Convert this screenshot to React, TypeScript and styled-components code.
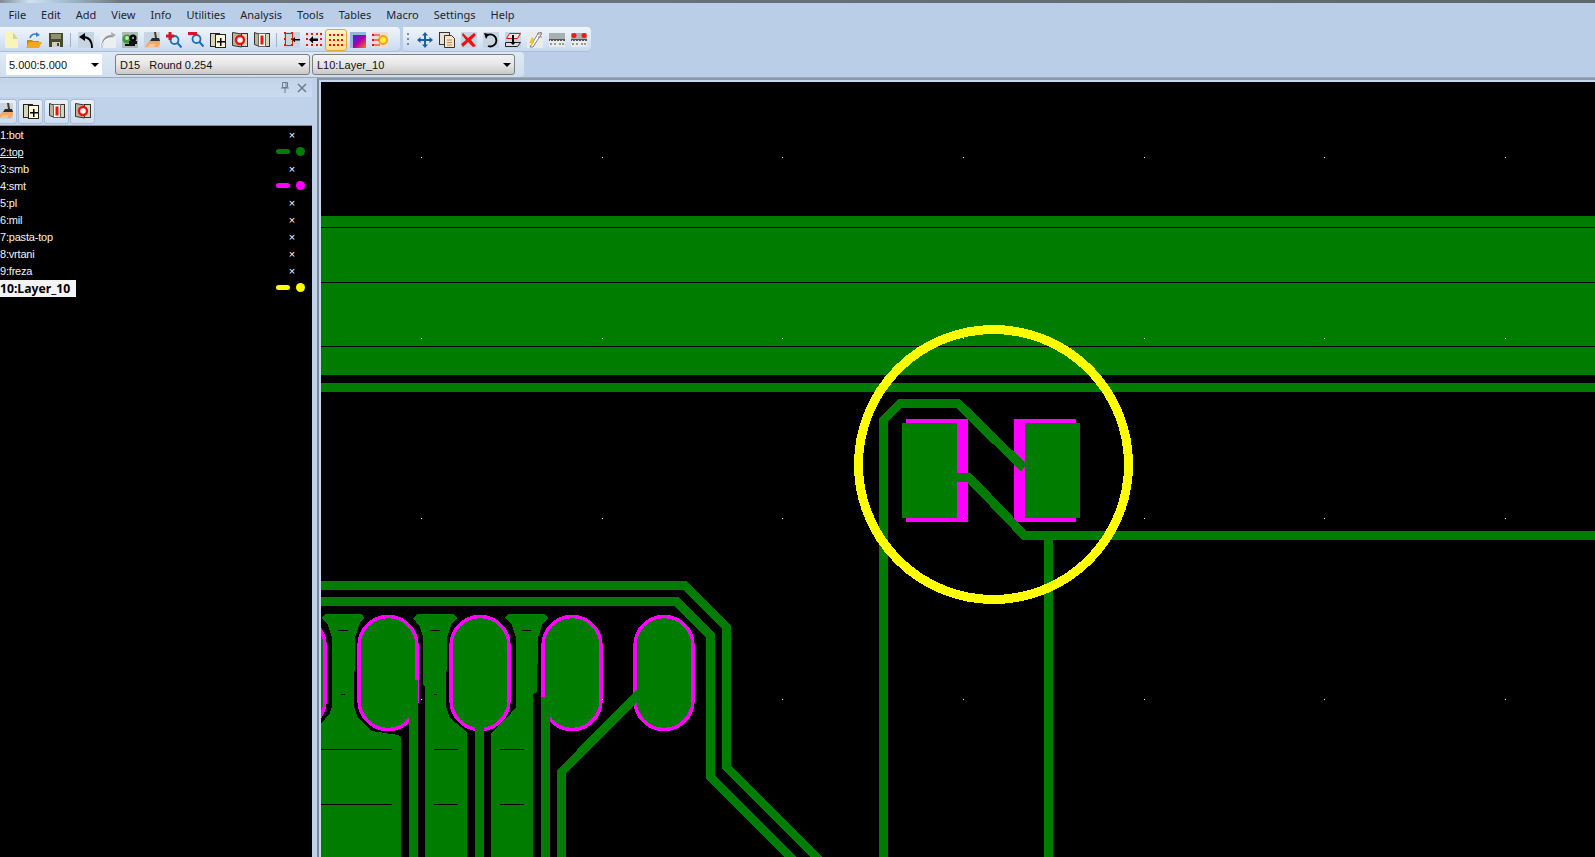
import React from "react";
import styled, { createGlobalStyle } from "styled-components";

const GREEN = "#007c00";
const MAGENTA = "#ff00ff";
const YELLOW = "#ffff00";

const Global = createGlobalStyle`
  html, body { margin: 0; padding: 0; background: #bacfe7; overflow: hidden; }
  body { font-family: "Noto Sans", "Liberation Sans", sans-serif; }
`;

const Window = styled.div`
  width: 1595px;
  height: 857px;
  display: flex;
  flex-direction: column;
  overflow: hidden;
  background: #bacfe7;
`;

const TitleStrip = styled.div`
  height: 3px;
  flex: none;
  background: linear-gradient(90deg, #7d8b96 0, #cfe3f2 30px, #a9c4d8 60px, #6f7880 120px, #5f666c 100%);
`;

const MenuBar = styled.div`
  height: 24px;
  flex: none;
  box-sizing: border-box;
  display: flex;
  align-items: center;
  padding: 0 0 2px 1px;
`;

const MenuItem = styled.span`
  padding: 0 7.5px;
  font-size: 11px;
  color: #1c2430;
`;

const ToolRow = styled.div`
  height: 25px;
  flex: none;
  display: flex;
  gap: 3px;
`;

const Toolbar = styled.div<{ $width: number; $inset: number }>`
  width: ${(p) => p.$width}px;
  height: 25px;
  box-sizing: border-box;
  display: flex;
  align-items: center;
  padding-left: ${(p) => p.$inset}px;
  border-radius: 0 4px 4px 0;
  background: linear-gradient(180deg, #f0f5fc 0, #dbe6f4 55%, #c6d8ee 100%);
  box-shadow: inset 0 -1px 0 #a9bfd9;
`;

const ToolButton = styled.span<{ $active?: boolean }>`
  width: 22px;
  height: 22px;
  flex: none;
  box-sizing: border-box;
  display: flex;
  align-items: center;
  justify-content: center;
  border-radius: 3px;
  ${(p) =>
    p.$active
      ? `border: 1px solid #e0a83c; background: linear-gradient(180deg, #fff3c4, #ffdf8c);`
      : ""}
`;

const Sep = styled.span`
  width: 1px;
  height: 14px;
  flex: none;
  margin: 0 4px 0 3px;
  background: #9db3cd;
`;

const Grip = styled.span`
  width: 2px;
  height: 14px;
  flex: none;
  margin-right: 5px;
  background: repeating-linear-gradient(180deg, #6e8bb0 0 2px, transparent 2px 5px);
`;

const ComboBar = styled.div`
  width: 524px;
  height: 25px;
  box-sizing: border-box;
  display: flex;
  align-items: center;
  padding-left: 6px;
  border-radius: 0 4px 4px 0;
  background: linear-gradient(180deg, #dfe9f6 0, #cfdeef 100%);
`;

const Combo = styled.div<{ $width: number; $plain?: boolean }>`
  width: ${(p) => p.$width}px;
  height: 21px;
  flex: none;
  box-sizing: border-box;
  display: flex;
  align-items: center;
  justify-content: space-between;
  padding: 0 3px 0 ${(p) => (p.$plain ? 3 : 4)}px;
  margin-right: ${(p) => (p.$plain ? 13 : 2)}px;
  font-family: "Liberation Sans", Arial, sans-serif;
  font-size: 11px;
  color: #111;
  white-space: pre;
  ${(p) =>
    p.$plain
      ? "background: #fff;"
      : `border: 1px solid #7d7d7d; border-radius: 3px;
         background: linear-gradient(180deg, #f4f4f4 0, #e6e6e6 50%, #c9c9c9 100%);`}
`;

const Caret = styled.span`
  width: 0;
  height: 0;
  border-left: 4px solid transparent;
  border-right: 4px solid transparent;
  border-top: 4px solid #000;
`;

const Workspace = styled.div`
  flex: 1;
  min-height: 0;
  display: flex;
  border-top: 1px solid #9aaabb;
`;

const Panel = styled.aside`
  width: 312px;
  flex: none;
  display: flex;
  flex-direction: column;
  overflow: hidden;
`;

const PanelTitle = styled.div`
  height: 19px;
  flex: none;
  display: flex;
  align-items: center;
  justify-content: flex-end;
  gap: 1px;
  padding-right: 2px;
  background: linear-gradient(180deg, #c2d4ea, #cadbf0);
`;

const PanelTools = styled.div`
  height: 28px;
  flex: none;
  display: flex;
  align-items: center;
  gap: 1px;
  margin-left: -8px;
  background: #bed2e9;
  border-bottom: 1px solid #7f8a96;
`;

const PanelButton = styled.span`
  width: 25px;
  height: 25px;
  flex: none;
  box-sizing: border-box;
  display: flex;
  align-items: center;
  justify-content: center;
  border: 1px solid #a9bdd6;
  border-radius: 3px;
  background: linear-gradient(180deg, #eaf1fa, #cddcf0);
`;

const LayerList = styled.ul`
  flex: 1;
  margin: 0;
  padding: 1px 7px 0 0;
  list-style: none;
  background: #000;
`;

const LayerRow = styled.li`
  height: 17px;
  display: flex;
  align-items: center;
  justify-content: space-between;
`;

const LayerName = styled.span<{ $active?: boolean; $under?: boolean }>`
  font-family: ${(p) => (p.$active ? '"Noto Sans"' : '"Liberation Sans"')}, sans-serif;
  font-size: ${(p) => (p.$active ? 12.2 : 11)}px;
  line-height: 17px;
  letter-spacing: ${(p) => (p.$active ? 0 : -0.2)}px;
  color: ${(p) => (p.$active ? "#000" : "#f2f2f2")};
  ${(p) => (p.$active ? "background: #f4f4f4; font-weight: 700; width: 76px;" : "")}
  ${(p) => (p.$under ? "text-decoration: underline;" : "")}
`;

const Marker = styled.span`
  width: 29px;
  margin-bottom: 2px;
  display: flex;
  align-items: center;
  justify-content: space-between;
`;

const OffMark = styled.span`
  width: 29px;
  padding-left: 3px;
  box-sizing: border-box;
  text-align: center;
  font-family: "Liberation Sans", sans-serif;
  font-size: 11px;
  line-height: 17px;
  color: #fff;
`;

const Dash = styled.span<{ $color: string }>`
  width: 14px;
  height: 5px;
  border-radius: 3px;
  background: ${(p) => p.$color};
`;

const Dot = styled.span<{ $color: string }>`
  width: 9px;
  height: 9px;
  border-radius: 50%;
  background: ${(p) => p.$color};
`;

const Splitter = styled.div`
  width: 5px;
  flex: none;
  background: #bed2e9;
`;

const CanvasFrame = styled.main`
  flex: 1;
  min-width: 0;
  box-sizing: border-box;
  padding: 2px 0 0 2px;
  border-left: 2px solid #7b8895;
  border-top: 2px solid #8b98a5;
  background: #c6d8ee;
`;

const Board = styled.svg`
  display: block;
  width: 1274px;
  height: 775px;
  background: #000;
`;

const Glyph = styled.svg`
  display: block;
  width: 16px;
  height: 16px;
`;

const Backdrop = () => <rect x="0" y="0" width="16" height="16" fill="#c7d5e2" />;

const dotGrid = (cols: number[], rows: number[]) =>
  cols.flatMap((x) => rows.map((y) => <rect key={`${x}-${y}`} x={x} y={y} width="2" height="2" fill="#f01010" />));

const comb = (
  <>
    <rect x="0" y="1" width="16" height="6" fill="#a8b0b4" />
    <rect x="0" y="7" width="16" height="2" fill="#555" />
    {[1, 4, 7, 10, 13].map((x) => (
      <rect key={x} x={x} y="8" width="1" height="1" fill="#ddd" />
    ))}
    <rect x="0" y="9" width="16" height="6" fill="#e8ecef" />
    {[1, 5, 10, 13].map((x) => (
      <rect key={x} x={x} y="11" width="2" height="2" fill="#999" />
    ))}
  </>
);

const icons: Record<string, React.ReactNode> = {
  file: (
    <>
      <path d="M1 0h8l5 7v9H1z" fill="#f9f5b8" />
      <path d="M9 0l5 7H9z" fill="#d8d39a" />
    </>
  ),
  open: (
    <>
      <path d="M1 8h5l1 1h6v2H4l-3 5z" fill="#c98a10" />
      <path d="M0 16l3-6h13l-3 6z" fill="#f5a623" />
      <path d="M4 6C5 2 9 1 12 3" fill="none" stroke="#2f7fd0" strokeWidth="1.6" />
      <path d="M10 0l4 3-4 2z" fill="#2f7fd0" />
    </>
  ),
  save: (
    <>
      <rect x="1" y="1" width="14" height="14" fill="#474b2c" />
      <rect x="3" y="2" width="10" height="5" fill="#8d9170" />
      <rect x="4" y="10" width="8" height="5" fill="#cfcfc4" />
      <rect x="9" y="11" width="2" height="3" fill="#474b2c" />
    </>
  ),
  undo: (
    <>
      <Backdrop />
      <path d="M14 16C14 9 11 5 5 5" fill="none" stroke="#000" strokeWidth="1.8" />
      <path d="M7 1L1 5l6 4z" fill="#000" />
    </>
  ),
  redo: (
    <>
      <rect width="16" height="16" fill="#eceff1" />
      <path d="M2 16C2 8 6 4 12 4" fill="none" stroke="#8f9499" strokeWidth="1.8" />
      <path d="M2 16C2 10 5 7 9 7" fill="none" stroke="#fff" strokeWidth="1" />
      <path d="M11 0l5 3-4 3z" fill="#a8adb2" />
    </>
  ),
  select: (
    <>
      <rect width="16" height="16" fill="#a9bcb8" />
      <circle cx="5" cy="7" r="4.500" fill="#3f9b3a" />
      <circle cx="5" cy="6" r="2" fill="#c8e6b0" />
      <circle cx="11" cy="6" r="3.600" fill="#000" />
      <path d="M7 9h8v3H7zM3 12h10v2H3z" fill="#111" />
      <circle cx="11" cy="6" r="1.200" fill="#9aa" />
    </>
  ),
  broom: (
    <>
      <Backdrop />
      <path d="M10 0h2l1 6h-2z" fill="#4a3a20" />
      <path d="M8 6h7l1 3H6z" fill="#2b2b2b" />
      <path d="M5 9h11v3l-2 3H1z" fill="#f3a868" />
      <path d="M6 12h6l-2 3H3z" fill="#f7c79b" />
    </>
  ),
  zoomIn: (
    <>
      <circle cx="8.500" cy="8" r="4" fill="#d5e7f5" stroke="#1c6fb5" strokeWidth="1.800" />
      <path d="M11.500 11l4 4.500" stroke="#1c6fb5" strokeWidth="2" />
      <path d="M2.500 0h3v2.500H8v3H5.500V8h-3V5.500H0v-3h2.500z" fill="#d8142a" />
    </>
  ),
  zoomOut: (
    <>
      <circle cx="8.500" cy="7" r="4" fill="#d5e7f5" stroke="#1c6fb5" strokeWidth="1.800" />
      <path d="M11.500 10l4 4.500" stroke="#1c6fb5" strokeWidth="2" />
      <rect x="0" y="0" width="9" height="3" fill="#d8142a" />
    </>
  ),
  pagePlus: (
    <>
      <rect x="0.500" y="1.500" width="9" height="13" fill="#d8d4b8" stroke="#222" />
      <rect x="5.500" y="2.500" width="10" height="13" fill="#fbf8dc" stroke="#222" />
      <path d="M10 6h1.500v3H15v1.500h-3.500V14H10v-3.500H7V9h3z" fill="#000" />
    </>
  ),
  pageO: (
    <>
      <path d="M0.500 0.500l9 1.500v13l-9-1.500z" fill="#b9b59a" stroke="#333" />
      <rect x="9.500" y="1.500" width="6" height="13" fill="#d8d4b8" stroke="#333" />
      <circle cx="8" cy="8" r="4" fill="#fff" stroke="#ee1111" strokeWidth="2.400" />
    </>
  ),
  pageI: (
    <>
      <path d="M0.500 0.500l4 1.500v12l-4-1.500z" fill="#b9b59a" stroke="#333" />
      <rect x="11.500" y="1.500" width="4" height="13" fill="#d8d4b8" stroke="#333" />
      <rect x="4.500" y="1.500" width="7" height="13" fill="#fbf8ec" stroke="#666" />
      <rect x="6.500" y="3.500" width="3" height="9" fill="#ee1111" />
    </>
  ),
  bracket: (
    <>
      <Backdrop />
      <rect x="1.500" y="1.500" width="7" height="12" fill="none" stroke="#e01818" />
      {dotGrid([0, 7], [0, 6, 12])}
      <path d="M11 7h5v1.600h-5v2L8 7.800 11 5z" fill="#000" />
    </>
  ),
  dotsArrow: (
    <>
      <rect width="16" height="16" fill="#dfe4e8" />
      {dotGrid([0, 5, 10, 14], [1, 12])}
      {dotGrid([0, 14], [6])}
      <path d="M7 6.500h5v2.500H7v2.500L3 7.800 7 4z" fill="#000" />
    </>
  ),
  dots: <>{dotGrid([1, 5, 9, 13], [2, 7, 12])}</>,
  gradient: (
    <>
      <defs>
        <linearGradient id="heat" x1="0" y1="0" x2="1" y2="1">
          <stop offset="0" stopColor="#2236d8" />
          <stop offset="0.500" stopColor="#b000a8" />
          <stop offset="1" stopColor="#ff7a00" />
        </linearGradient>
      </defs>
      <rect width="16" height="16" fill="#9ab4e0" />
      <rect x="3" y="3" width="13" height="13" fill="url(#heat)" />
    </>
  ),
  flare: (
    <>
      <rect width="16" height="16" fill="#e9dfd0" />
      <circle cx="11" cy="8" r="5" fill="#ff9a2a" />
      <circle cx="11" cy="8" r="3" fill="#fff23a" />
      <path d="M2 3h6M2 8h5M2 13h6" stroke="#e01818" strokeWidth="1" />
      {dotGrid([0], [2, 7, 12])}
    </>
  ),
  move: (
    <path
      d="M8 0l3 3.500H9V7h3.500V5L16 8l-3.500 3V9H9v3.500h2L8 16l-3-3.500h2V9H3.500v2L0 8l3.500-3v2H7V3.500H5z"
      fill="#1f5f9a"
    />
  ),
  copy: (
    <>
      <rect x="0.500" y="0.500" width="10" height="12" fill="#e8e2d6" stroke="#333" />
      <path d="M5.500 3.500h7l3 3v9h-10z" fill="#fbe3c6" stroke="#333" />
      <path d="M8 8h5M8 10.500h5M8 13h5" stroke="#b98a5a" />
    </>
  ),
  del: (
    <>
      <Backdrop />
      <path d="M2 1l5 5 6-5 2 2-5 5 5 6-3 1-5-5-5 5-2-3 5-4-4-5z" fill="#ee1111" />
    </>
  ),
  rotate: (
    <>
      <Backdrop />
      <path d="M4 3.500A6 6 0 1 1 5 14" fill="none" stroke="#000" strokeWidth="1.800" />
      <path d="M1 1l5 1-3 5z" fill="#000" />
    </>
  ),
  layer: (
    <>
      <Backdrop />
      <path d="M4.500 1.500h11l-3 5h-11z" fill="#efe6e2" stroke="#d01818" />
      <path d="M0.500 10.500h15l-3 4h-12z" fill="#d8dde0" stroke="#222" />
      <path d="M7 3h2v7h2l-3 3-3-3h2z" fill="#000" />
    </>
  ),
  wand: (
    <>
      <rect width="16" height="16" fill="#e9ecef" />
      <path d="M15 1L6 15H3L12 0z" fill="#fff" stroke="#666" strokeWidth="0.800" />
      <path d="M5 5l2 2-1 2 1 1-3 5 0-4-2 0z" fill="#f4c430" />
      <path d="M10 2h5M11 5h4" stroke="#888" />
    </>
  ),
  comb,
  combRed: (
    <>
      {comb}
      <circle cx="3" cy="3.500" r="2.500" fill="#f01a0a" />
      <circle cx="13" cy="3.500" r="2.500" fill="#f01a0a" />
    </>
  ),
  pin: <path d="M5.500 2.500h5v5h-5zM4 8h8M8 8v5M9 3v4" fill="none" stroke="#6c7c8e" strokeWidth="1" />,
  close: <path d="M4 4l8 8M12 4l-8 8" fill="none" stroke="#6c7c8e" strokeWidth="1.500" />,
};

const Icon = ({ name }: { name: string }) => <Glyph viewBox="0 0 16 16">{icons[name]}</Glyph>;

const MENU = ["File", "Edit", "Add", "View", "Info", "Utilities", "Analysis", "Tools", "Tables", "Macro", "Settings", "Help"];

const LAYERS: { name: string; color?: string; under?: boolean; active?: boolean }[] = [
  { name: "1:bot" },
  { name: "2:top", color: GREEN, under: true },
  { name: "3:smb" },
  { name: "4:smt", color: MAGENTA },
  { name: "5:pl" },
  { name: "6:mil" },
  { name: "7:pasta-top" },
  { name: "8:vrtani" },
  { name: "9:freza" },
  { name: "10:Layer_10", color: YELLOW, active: true },
];

const GRID_X = [421, 602, 782, 963, 1144, 1324, 1505];
const GRID_Y = [157, 338, 518, 699];

// clearance cut-outs of the pour under the connector, page coordinates
const POURS = [
  "322,618 325,614 362,614 364,618 360,623 355,637 354,707 358,718 372,731 398,735 401,738 401,857 321,857 321,724 330,713 332,707 332,637 328,625",
  "413,618 417,614 453,614 457,618 452,623 447,637 446,707 450,718 467,732 467,857 425,857 425,687 423,685 423,637 420,627",
  "505,618 508,614 545,614 548,618 543,623 538,637 537,692 533,694 533,857 491,857 491,733 492,732 507,718 516,707 516,637 512,625",
];

const DASHES = [
  [338, 630, 10], [430, 630, 10], [522, 630, 9],
  [341, 694, 4], [434, 694, 3],
  [321, 749, 71], [434, 749, 24], [500, 749, 24],
  [321, 804, 71], [434, 804, 24], [500, 804, 24],
];

const PAD_X = [267, 359, 451, 543, 635];

// the two long runs carry on past the bottom edge so the cut end stays out of view
const TRACES = [
  "321,585.500 685,585.500 726.500,627 726.500,767 832,872.500",
  "321,601.500 676.500,601.500 710.500,635.500 710.500,777 806,872.500",
  "413.500,680 413.500,857",
  "479.500,725 479.500,857",
  "545.500,697 545.500,857",
  "640,693 561.500,772 561.500,857",
  "883.500,857 883.500,420 900,403.500 958,403.500 1024,468",
  "957,477 968.500,477 1024,535 1595,535",
  "1048.500,535 1048.500,857",
];

const PcbBoard = () => (
  <Board viewBox="321 82 1274 775" shapeRendering="crispEdges">
    <rect x="321" y="216" width="1274" height="159" fill={GREEN} />
    {[227, 282, 346].map((y) => (
      <rect key={y} x="321" y={y} width="1274" height="1" fill="#000" />
    ))}
    <rect x="321" y="383" width="1274" height="9" fill={GREEN} />

    {POURS.map((points) => (
      <polygon key={points} points={points} fill={GREEN} />
    ))}
    {DASHES.map(([x, y, w]) => (
      <rect key={`${x}-${y}`} x={x} y={y} width={w} height="1" fill="#000" />
    ))}
    {PAD_X.map((x) => (
      <rect
        key={x}
        x={x}
        y="616.500"
        width="58"
        height="113"
        rx="29"
        fill={GREEN}
        stroke={MAGENTA}
        strokeWidth="3.500"
      />
    ))}

    <rect x="906" y="419" width="62" height="103" fill={MAGENTA} />
    <rect x="1014" y="419" width="62" height="103" fill={MAGENTA} />
    <rect x="902" y="423" width="55" height="95" fill={GREEN} />
    <rect x="1025" y="423" width="55" height="95" fill={GREEN} />

    {TRACES.map((points) => (
      <polyline key={points} points={points} fill="none" stroke={GREEN} strokeWidth="9" strokeLinejoin="miter" />
    ))}

    <circle cx="993.500" cy="464.500" r="135" fill="none" stroke={YELLOW} strokeWidth="9" />

    {GRID_X.flatMap((x) =>
      GRID_Y.map((y) => <rect key={`${x}-${y}`} x={x} y={y} width="1" height="1" fill="#fff" />)
    )}
  </Board>
);

export default function App() {
  return (
    <Window>
      <Global />
      <TitleStrip />
      <MenuBar>
        {MENU.map((item) => (
          <MenuItem key={item}>{item}</MenuItem>
        ))}
      </MenuBar>
      <ToolRow>
        <Toolbar $width={400} $inset={1}>
          {["file", "open", "save"].map((n) => (
            <ToolButton key={n}><Icon name={n} /></ToolButton>
          ))}
          <Sep />
          {["undo", "redo", "select", "broom", "zoomIn", "zoomOut", "pagePlus", "pageO", "pageI"].map((n) => (
            <ToolButton key={n}><Icon name={n} /></ToolButton>
          ))}
          <Sep />
          <ToolButton><Icon name="bracket" /></ToolButton>
          <ToolButton><Icon name="dotsArrow" /></ToolButton>
          <ToolButton $active><Icon name="dots" /></ToolButton>
          <ToolButton><Icon name="gradient" /></ToolButton>
          <ToolButton><Icon name="flare" /></ToolButton>
        </Toolbar>
        <Toolbar $width={188} $inset={4}>
          <Grip />
          {["move", "copy", "del", "rotate", "layer", "wand", "comb", "combRed"].map((n) => (
            <ToolButton key={n}><Icon name={n} /></ToolButton>
          ))}
        </Toolbar>
      </ToolRow>
      <ToolRow>
        <ComboBar>
          <Combo $width={96} $plain>
            5.000:5.000
            <Caret />
          </Combo>
          <Combo $width={195}>
            {"D15   Round 0.254"}
            <Caret />
          </Combo>
          <Combo $width={203}>
            L10:Layer_10
            <Caret />
          </Combo>
        </ComboBar>
      </ToolRow>
      <Workspace>
        <Panel>
          <PanelTitle>
            <Icon name="pin" />
            <Icon name="close" />
          </PanelTitle>
          <PanelTools>
            {["broom", "pagePlus", "pageI", "pageO"].map((n) => (
              <PanelButton key={n}><Icon name={n} /></PanelButton>
            ))}
          </PanelTools>
          <LayerList>
            {LAYERS.map((layer) => (
              <LayerRow key={layer.name}>
                <LayerName $active={layer.active} $under={layer.under}>{layer.name}</LayerName>
                {layer.color ? (
                  <Marker>
                    <Dash $color={layer.color} />
                    <Dot $color={layer.color} />
                  </Marker>
                ) : (
                  <OffMark>×</OffMark>
                )}
              </LayerRow>
            ))}
          </LayerList>
        </Panel>
        <Splitter />
        <CanvasFrame>
          <PcbBoard />
        </CanvasFrame>
      </Workspace>
    </Window>
  );
}
